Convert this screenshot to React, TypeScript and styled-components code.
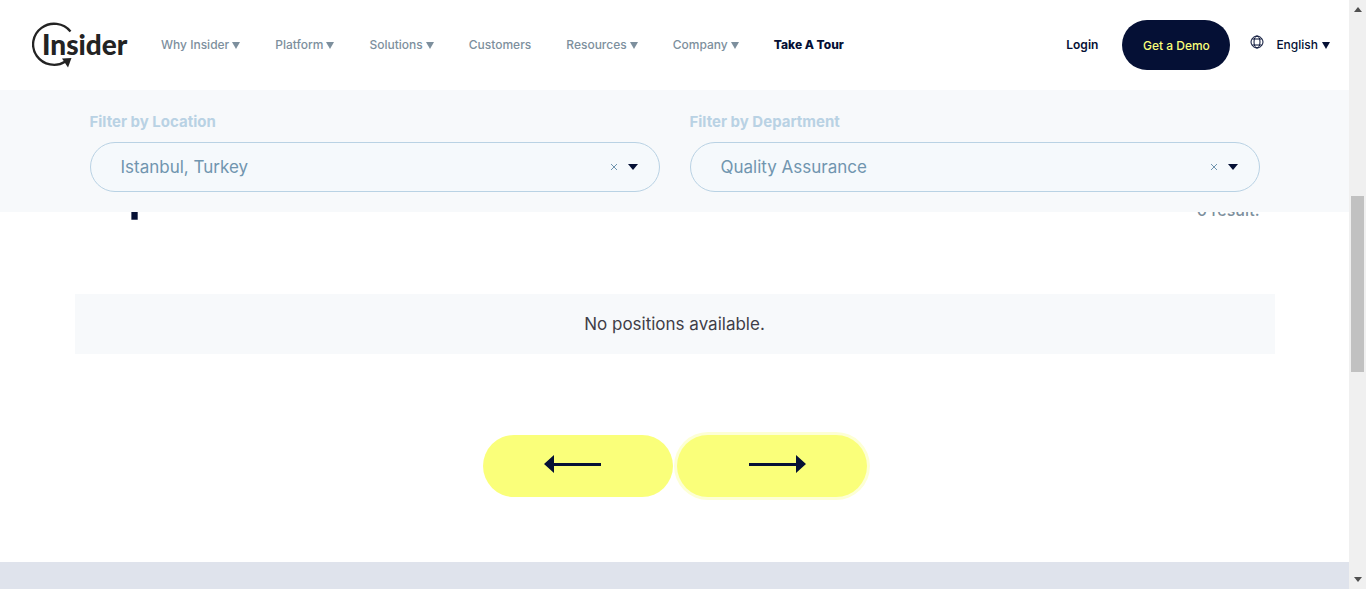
import React from "react";
import styled, { createGlobalStyle } from "styled-components";

const navy = "#051035";
const slate = "#7d8f9d";
const pale = "#b9d2e4";
const steel = "#7095af";

const GlobalStyle = createGlobalStyle`
  *, *::before, *::after { box-sizing: border-box; }
  body {
    margin: 0;
    background: #fff;
    color: ${navy};
    font-family: Inter, "Liberation Sans", sans-serif;
  }
  button, select { font: inherit; }
`;

const Frame = styled.div`
  display: flex;
  height: 100vh;
  overflow: hidden;
`;

const Page = styled.div`
  flex: 1;
  min-width: 0;
  display: flex;
  flex-direction: column;
`;

const Top = styled.div`
  position: relative;
  z-index: 1;
`;

const Header = styled.header`
  display: flex;
  align-items: center;
  height: 90px;
  padding: 0 19px 0 32px;
  background: #fff;
`;

const Logo = styled.a`
  display: block;
  margin-right: 31px;
  svg { display: block; }
`;

const Nav = styled.nav`
  display: flex;
  gap: 35px;
`;

const NavLink = styled.a<{ $strong?: boolean }>`
  display: flex;
  align-items: baseline;
  gap: 3px;
  font-size: 12px;
  line-height: 20px;
  font-weight: ${(p) => (p.$strong ? 800 : 500)};
  color: ${(p) => (p.$strong ? navy : slate)};
  text-decoration: none;
  white-space: nowrap;
`;

const Account = styled.div`
  display: flex;
  align-items: center;
  margin-left: auto;
`;

const Login = styled.a`
  font-size: 12px;
  line-height: 20px;
  font-weight: 600;
  color: ${navy};
  text-decoration: none;
`;

const DemoButton = styled.button`
  width: 108px;
  height: 50px;
  margin: 0 20px 0 24px;
  padding: 0;
  border: 0;
  border-radius: 25px;
  background: ${navy};
  color: #faff7a;
  font-size: 12px;
  font-weight: 500;
`;

const Language = styled.button`
  display: flex;
  align-items: baseline;
  gap: 4px;
  padding: 0;
  border: 0;
  background: none;
  color: ${navy};
  font-size: 12px;
  line-height: 20px;
  font-weight: 500;
  svg:first-child { margin-right: 8px; }
`;

const FilterBar = styled.form`
  height: 122px;
  padding-top: 20px;
  background: #f7f9fb;
`;

const FilterGrid = styled.div`
  display: grid;
  grid-template-columns: 1fr 1fr;
  gap: 30px;
  max-width: 1200px;
  margin: 0 auto;
  padding: 0 15px;
`;

const FilterLabel = styled.label`
  display: block;
  margin-bottom: 8px;
  font-size: 15px;
  line-height: 24px;
  font-weight: 700;
  color: ${pale};
`;

const SelectBox = styled.div`
  position: relative;
`;

const Select = styled.select`
  display: block;
  width: 100%;
  height: 50px;
  padding: 0 60px 0 30px;
  appearance: none;
  border: 1px solid ${pale};
  border-radius: 25px;
  background: #f5f9fc;
  color: ${steel};
  font-size: 17px;
`;

const SelectMarks = styled.div`
  position: absolute;
  top: 0;
  right: 22px;
  height: 50px;
  display: flex;
  align-items: center;
  gap: 10px;
  pointer-events: none;
`;

const ClearButton = styled.button`
  display: flex;
  padding: 0;
  border: 0;
  background: none;
  color: ${steel};
  pointer-events: auto;
`;

const Results = styled.main`
  width: 100%;
  max-width: 1200px;
  margin: -56px auto 0;
`;

const ResultsHead = styled.div`
  display: flex;
  justify-content: space-between;
  align-items: flex-end;
  height: 64px;
  padding: 0 15px;
`;

const Title = styled.h2`
  margin: 0;
  font-size: 50px;
  line-height: 56px;
  font-weight: 600;
`;

const Count = styled.p`
  margin: 0;
  font-size: 16px;
  line-height: 20px;
  font-weight: 500;
  color: ${slate};
`;

const EmptyMessage = styled.p`
  margin: 74px 0 0;
  background: #f7f9fb;
  color: #3f3e48;
  font-size: 17px;
  line-height: 60px;
  text-align: center;
`;

const Pager = styled.div`
  display: flex;
  justify-content: center;
  gap: 4px;
  margin: 81px 0 65px;
`;

const PageButton = styled.button<{ $back?: boolean; $focused?: boolean }>`
  display: flex;
  justify-content: center;
  width: 190px;
  height: 62px;
  padding: ${(p) => (p.$back ? "20px 10px 0 0" : "20px 0 0 10px")};
  border: 0;
  border-radius: 31px;
  background: #faff7a;
  box-shadow: ${(p) => (p.$focused ? "0 0 0 3px #fdffd5" : "none")};
`;

const Footer = styled.footer`
  flex: 1;
  background: #dfe3ec;
`;

const ScrollBar = styled.div`
  display: flex;
  flex-direction: column;
  align-items: center;
  justify-content: space-between;
  width: 17px;
  padding: 7px 0;
  background: #f0f0f0;
`;

const ScrollTrack = styled.div`
  flex: 1;
  display: grid;
  grid-template-rows: 184fr 176fr 205fr;
  width: 13px;
`;

const ScrollThumb = styled.div`
  grid-row: 2;
  background: #c1c1c1;
`;

const Caret = ({ width = 8, height = 7, color = "currentColor" }) => (
  <svg width={width} height={height} viewBox="0 0 8 7" preserveAspectRatio="none" aria-hidden="true">
    <path d="M0 0H8L4 7Z" fill={color} />
  </svg>
);

const Arrow = ({ left }: { left?: boolean }) => (
  <svg width="58" height="18" viewBox="0 0 58 18" aria-hidden="true">
    {left ? (
      <path d="M0 9L10 0V8H57V11H10V18Z" fill={navy} />
    ) : (
      <path d="M58 9L48 0V8H1V11H48V18Z" fill={navy} />
    )}
  </svg>
);

const links = [
  { text: "Why Insider", menu: true },
  { text: "Platform", menu: true },
  { text: "Solutions", menu: true },
  { text: "Customers" },
  { text: "Resources", menu: true },
  { text: "Company", menu: true },
  { text: "Take A Tour", strong: true },
];

const filters = [
  { id: "location", label: "Filter by Location", value: "Istanbul, Turkey" },
  { id: "department", label: "Filter by Department", value: "Quality Assurance" },
];

export default function App() {
  return (
    <Frame>
      <GlobalStyle />
      <Page>
        <Top>
          <Header>
            <Logo href="#" aria-label="Insider home">
              <svg width="98" height="46" viewBox="0 0 98 46">
                <path d="M38.5 9.5A21 20.5 0 1 0 33.5 39.5" fill="none" stroke="#232323" strokeWidth="2.3" />
                <path d="M30 36.5L39.5 36L36 45.5Z" fill="#232323" />
                <text x="10" y="33" fontFamily="Lato, sans-serif" fontSize="28" fontWeight="900" fill="#232323">
                  Insider
                </text>
              </svg>
            </Logo>
            <Nav>
              {links.map((l) => (
                <NavLink key={l.text} href="#" $strong={l.strong}>
                  {l.text}
                  {l.menu && <Caret />}
                </NavLink>
              ))}
            </Nav>
            <Account>
              <Login href="#">Login</Login>
              <DemoButton type="button">Get a Demo</DemoButton>
              <Language type="button">
                <svg width="14" height="14" viewBox="0 0 14 14" fill="none" stroke={navy} aria-hidden="true">
                  <circle cx="7" cy="7" r="6" />
                  <ellipse cx="7" cy="7" rx="3" ry="6" />
                  <path d="M2 4H12M2 10H12" />
                </svg>
                English
                <Caret />
              </Language>
            </Account>
          </Header>
          <FilterBar>
            <FilterGrid>
              {filters.map((f) => (
                <div key={f.id}>
                  <FilterLabel htmlFor={f.id}>{f.label}</FilterLabel>
                  <SelectBox>
                    <Select id={f.id} defaultValue={f.value}>
                      <option>{f.value}</option>
                    </Select>
                    <SelectMarks>
                      <ClearButton type="button" aria-label={`Clear ${f.id}`}>
                        <svg width="8" height="8" viewBox="0 0 8 8" stroke="currentColor">
                          <path d="M1 1L7 7M7 1L1 7" />
                        </svg>
                      </ClearButton>
                      <Caret width={10} height={6} color={navy} />
                    </SelectMarks>
                  </SelectBox>
                </div>
              ))}
            </FilterGrid>
          </FilterBar>
        </Top>
        <Results>
          <ResultsHead>
            <Title>Open Positions</Title>
            <Count>0 result.</Count>
          </ResultsHead>
          <EmptyMessage>No positions available.</EmptyMessage>
          <Pager>
            <PageButton type="button" aria-label="Previous page" $back>
              <Arrow left />
            </PageButton>
            <PageButton type="button" aria-label="Next page" $focused>
              <Arrow />
            </PageButton>
          </Pager>
        </Results>
        <Footer />
      </Page>
      <ScrollBar aria-hidden="true">
        <svg width="8" height="5" viewBox="0 0 8 5">
          <path d="M0 5L4 0L8 5Z" fill="#505050" />
        </svg>
        <ScrollTrack>
          <ScrollThumb />
        </ScrollTrack>
        <svg width="8" height="5" viewBox="0 0 8 5">
          <path d="M0 0L4 5L8 0Z" fill="#505050" />
        </svg>
      </ScrollBar>
    </Frame>
  );
}
